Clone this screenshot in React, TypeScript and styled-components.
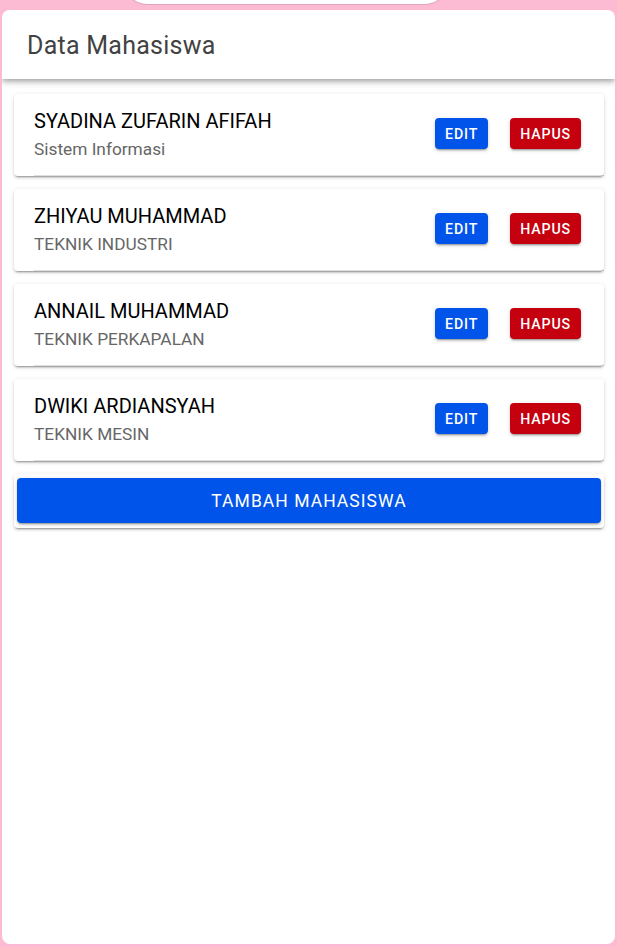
import React from "react";
import styled, { createGlobalStyle } from "styled-components";

const GlobalStyle = createGlobalStyle`
  html, body {
    margin: 0;
    padding: 0;
    background: #fdbbd3;
    font-family: Roboto, "Liberation Sans", Arial, sans-serif;
    -webkit-font-smoothing: antialiased;
  }
  * { box-sizing: border-box; }
`;

const Frame = styled.div`
  position: relative;
  width: 617px;
  height: 947px;
  padding: 10px 2px 3px 2px;
`;

const Notch = styled.div`
  position: absolute;
  top: -30px;
  left: 125px;
  width: 322px;
  height: 34px;
  background: #ffffff;
  border-radius: 0 0 22px 22px;
  box-shadow: 0 0 0 1px rgba(0, 0, 0, 0.12);
`;

const Screen = styled.div`
  height: 100%;
  background: #ffffff;
  border-radius: 8px;
  overflow: hidden;
  display: flex;
  flex-direction: column;
`;

const Header = styled.header`
  height: 69px;
  display: flex;
  align-items: center;
  padding: 0 24px;
  background: #ffffff;
  position: relative;
  z-index: 2;
  box-shadow: 0 2px 4px -1px rgba(0, 0, 0, 0.2), 0 4px 5px 0 rgba(0, 0, 0, 0.14),
    0 1px 10px 0 rgba(0, 0, 0, 0.12);
`;

const Title = styled.h1`
  margin: 0 0 0 1px;
  font-size: 25px;
  font-weight: 400;
  color: #424242;
  letter-spacing: 0.01em;
  padding-top: 2px;
`;

const Content = styled.main`
  flex: 1;
  display: flex;
  flex-direction: column;
  gap: 13px;
  padding: 15px 11px 0 12px;
`;

const Card = styled.section`
  background: #ffffff;
  border-radius: 4px;
  box-shadow: 0 3px 1px -2px rgba(0, 0, 0, 0.2), 0 2px 2px 0 rgba(0, 0, 0, 0.14),
    0 1px 5px 0 rgba(0, 0, 0, 0.12);
`;

const Row = styled.div`
  height: 82px;
  margin-left: 20px;
  padding-right: 23px;
  display: flex;
  align-items: center;
  border-bottom: 1px solid rgba(0, 0, 0, 0.13);
`;

const Info = styled.div`
  flex: 1;
  display: flex;
  flex-direction: column;
  gap: 6px;
  padding-bottom: 2px;
`;

const Name = styled.h2`
  margin: 0;
  font-size: 20px;
  line-height: 24px;
  font-weight: 400;
  color: #000000;
`;

const Major = styled.p`
  margin: 0;
  font-size: 17.3px;
  line-height: 20px;
  color: #666666;
`;

const Actions = styled.div`
  display: flex;
  gap: 22px;
  align-items: center;
  padding-bottom: 2px;
`;

const SmallButton = styled.button<{ $tone: "primary" | "danger" }>`
  height: 31px;
  padding: 0 10px;
  border: none;
  border-radius: 4px;
  background: ${(p) => (p.$tone === "primary" ? "#0054e9" : "#c5000f")};
  color: #ffffff;
  font-family: Roboto, "Liberation Sans", Arial, sans-serif;
  font-size: 14.2px;
  font-weight: 500;
  letter-spacing: 0.06em;
  box-shadow: 0 3px 1px -2px rgba(0, 0, 0, 0.2), 0 2px 2px 0 rgba(0, 0, 0, 0.14),
    0 1px 5px 0 rgba(0, 0, 0, 0.12);
`;

const AddCard = styled(Card)`
  padding: 4px 3px 5px;
`;

const AddButton = styled.button`
  width: 100%;
  height: 45px;
  border: none;
  border-radius: 4px;
  background: #0054e9;
  color: #ffffff;
  font-family: Roboto, "Liberation Sans", Arial, sans-serif;
  font-size: 17.5px;
  font-weight: 400;
  letter-spacing: 0.06em;
  display: flex;
  align-items: center;
  justify-content: center;
  box-shadow: 0 3px 1px -2px rgba(0, 0, 0, 0.2), 0 2px 2px 0 rgba(0, 0, 0, 0.14),
    0 1px 5px 0 rgba(0, 0, 0, 0.12);
`;

const students = [
  { name: "SYADINA ZUFARIN AFIFAH", major: "Sistem Informasi" },
  { name: "ZHIYAU MUHAMMAD", major: "TEKNIK INDUSTRI" },
  { name: "ANNAIL MUHAMMAD", major: "TEKNIK PERKAPALAN" },
  { name: "DWIKI ARDIANSYAH", major: "TEKNIK MESIN" },
];

export default function App() {
  return (
    <>
      <GlobalStyle />
      <Frame>
        <Notch />
        <Screen>
          <Header>
            <Title>Data Mahasiswa</Title>
          </Header>
          <Content>
            {students.map((s) => (
              <Card key={s.name}>
                <Row>
                  <Info>
                    <Name>{s.name}</Name>
                    <Major>{s.major}</Major>
                  </Info>
                  <Actions>
                    <SmallButton $tone="primary">EDIT</SmallButton>
                    <SmallButton $tone="danger">HAPUS</SmallButton>
                  </Actions>
                </Row>
              </Card>
            ))}
            <AddCard>
              <AddButton>TAMBAH MAHASISWA</AddButton>
            </AddCard>
          </Content>
        </Screen>
      </Frame>
    </>
  );
}
